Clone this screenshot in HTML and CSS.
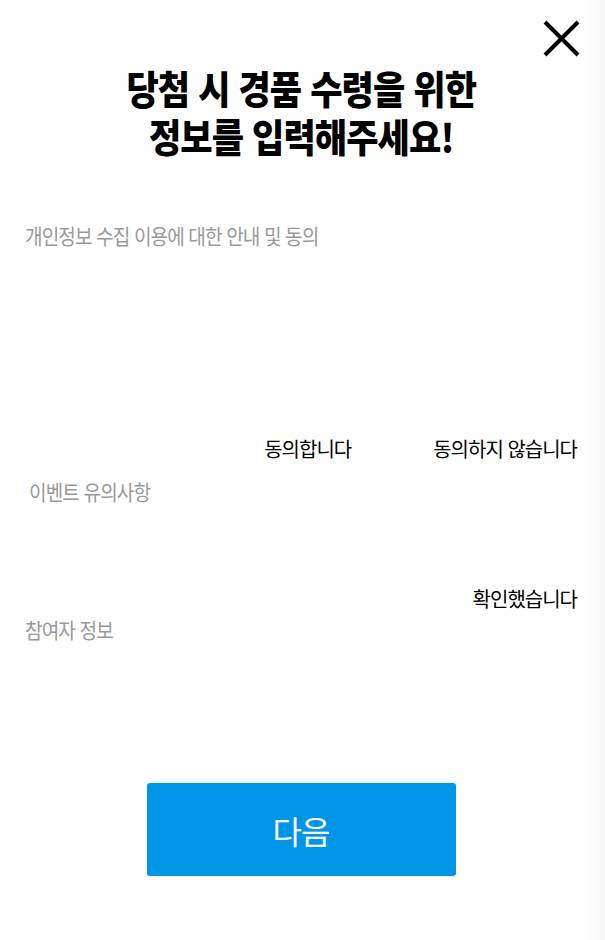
FILE: index.html
```html
<!DOCTYPE html>
<html lang="ko">
<head>
<meta charset="utf-8">
<link rel="stylesheet" href="styles.css">
</head>
<body>
<div class="page">
  <header class="head">
    <button class="close" aria-label="닫기">
      <svg width="37" height="37" viewBox="0 0 37 37"><path d="M2 2L35 35M35 2L2 35" stroke="#000" stroke-width="4" fill="none"/></svg>
    </button>
    <h1 class="title"><span class="cond">당첨 시 경품 수령을 위한</span><span class="cond">정보를 입력해주세요!</span></h1>
  </header>

  <section class="sec sec-agree">
    <h2 class="label"><span class="cond">개인정보 수집 이용에 대한 안내 및 동의</span></h2>
    <div class="body body-agree"></div>
    <div class="choices">
      <span class="opt opt-yes">동의합니다</span>
      <span class="opt opt-no">동의하지 않습니다</span>
    </div>
  </section>

  <section class="sec sec-notice">
    <h2 class="label label-notice"><span class="cond">이벤트 유의사항</span></h2>
    <div class="body body-notice"></div>
    <div class="choices">
      <span class="opt">확인했습니다</span>
    </div>
  </section>

  <section class="sec sec-info">
    <h2 class="label"><span class="cond">참여자 정보</span></h2>
    <div class="body body-info"></div>
  </section>

  <div class="actions">
    <button class="next">다음</button>
  </div>
</div>
</body>
</html>
```
FILE: styles.css
```css
html, body {
  margin: 0;
  padding: 0;
  background: #fff;
}
body {
  font-family: "Noto Sans CJK KR", "Noto Sans", sans-serif;
  color: #000;
}
.page {
  width: 605px;
  height: 940px;
  box-sizing: border-box;
  padding: 0 28px 0 25px;
  background: linear-gradient(to right, #fff 0, #fff 584px, #f6f6f6 605px);
}
.head {
  display: flex;
  flex-direction: column;
  padding-top: 20px;
}
.close {
  align-self: flex-end;
  border: 0;
  background: none;
  padding: 0;
  margin: 0 -3px 0 0;
  width: 37px;
  height: 37px;
  display: block;
}
.title {
  margin: 6px 0 0 0;
  display: flex;
  flex-direction: column;
  align-items: center;
  gap: 0;
  font-size: 39px;
  font-weight: 900;
  line-height: 48px;
  letter-spacing: -1px;
}
.title .cond {
  display: block;
  height: 48px;
  white-space: nowrap;
  transform: scaleX(0.9);
  transform-origin: center;
}
.sec { display: flex; flex-direction: column; }
.label {
  margin: 0;
  font-size: 21px;
  font-weight: 400;
  color: #999;
  line-height: 26px;
  letter-spacing: -1px;
}
.label .cond {
  display: inline-block;
  transform: scaleX(0.91);
  transform-origin: left center;
}
.label-notice { padding-left: 4px; }
.sec-agree { margin-top: 63px; }
.body-agree { height: 188px; }
.choices {
  display: flex;
  justify-content: flex-end;
  gap: 82px;
  font-size: 20px;
  line-height: 26px;
  letter-spacing: -1px;
}
.sec-notice { margin-top: 16px; }
.body-notice { height: 82px; }
.sec-info { margin-top: 4px; }
.body-info { height: 141px; }
.actions { display: flex; justify-content: center; }
.next {
  width: 309px;
  height: 93px;
  border: 0;
  border-radius: 3px;
  background: #0096e8;
  color: #fff;
  font-family: inherit;
  font-size: 32px;
  letter-spacing: -1px;
}
```
